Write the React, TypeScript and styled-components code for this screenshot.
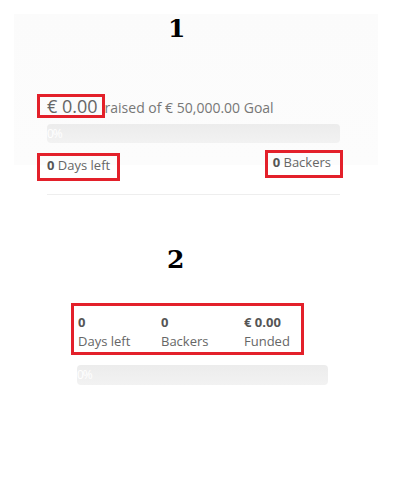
import React from 'react'
import styled, { createGlobalStyle } from 'styled-components'

const GlobalStyle = createGlobalStyle`
  body {
    margin: 0;
    background: #ffffff;
    font-family: "Open Sans", "Liberation Sans", sans-serif;
    color: #666666;
  }
`

const App: React.FC = () => {
  return (
    <Page>
      <GlobalStyle />
      <Panel>
        <Number>1</Number>
        <Card>
          <RaisedRow>
            <Highlight $pad='0 4px 0 7px'>
              <Amount>€ 0.00</Amount>
            </Highlight>
            <RaisedText>raised of € 50,000.00 Goal</RaisedText>
          </RaisedRow>
          <Progress $width={293}>0%</Progress>
          <StatsRow>
            <Highlight $pad='1px 7px 4px 7px'>
              <Stat><b>0</b> Days left</Stat>
            </Highlight>
            <Highlight $pad='1px 9px 4px 5px' $right>
              <Stat><b>0</b> Backers</Stat>
            </Highlight>
          </StatsRow>
          <Divider />
        </Card>
      </Panel>

      <Second>
        <Number>2</Number>
        <StatsBox>
          <Column>
            <b>0</b>
            <span>Days left</span>
          </Column>
          <Column>
            <b>0</b>
            <span>Backers</span>
          </Column>
          <Column>
            <b>€ 0.00</b>
            <span>Funded</span>
          </Column>
        </StatsBox>
        <Progress $width={251}>0%</Progress>
      </Second>
    </Page>
  )
}

export default App

export const Page = styled.div`
  width: 400px;
  min-height: 500px;
  padding-top: 14px;
  box-sizing: border-box;
`
export const Panel = styled.div`
  width: 364px;
  height: 182px;
  margin-left: 14px;
  padding-top: 3px;
  box-sizing: border-box;
  background: linear-gradient(#fbfbfb 0, #fcfcfc 151px, #ffffff 151px);
`
export const Number = styled.div`
  font-family: "DejaVu Serif", "Liberation Serif", serif;
  font-weight: 900;
  font-size: 25px;
  line-height: 24px;
  color: #000000;
  padding-left: 154px;
`
export const Card = styled.div`
  width: 293px;
  margin: 53px 0 0 33px;
`
export const RaisedRow = styled.div`
  display: flex;
  align-items: baseline;
`
export const Highlight = styled.div<{ $pad: string; $right?: boolean }>`
  border: 3px solid #e3202a;
  padding: ${p => p.$pad};
  margin-left: ${p => (p.$right ? '0' : '-10px')};
  margin-right: ${p => (p.$right ? '-3px' : '0')};
  margin-top: ${p => (p.$right ? '-3px' : '0')};
`
export const Amount = styled.span`
  display: block;
  font-size: 18px;
  line-height: 18px;
  color: #666666;
`
export const RaisedText = styled.span`
  font-size: 14px;
  line-height: 16px;
  color: #777777;
`
export const Progress = styled.div<{ $width: number }>`
  width: ${p => p.$width}px;
  height: 19px;
  margin-top: 6px;
  border-radius: 4px;
  background: linear-gradient(#ececec, #f2f2f2);
  color: #ffffff;
  font-size: 12px;
  line-height: 19px;
  letter-spacing: -1px;
`
export const StatsRow = styled.div`
  display: flex;
  justify-content: space-between;
  align-items: flex-start;
  margin-top: 10px;
`
export const Stat = styled.span`
  display: block;
  font-size: 13px;
  line-height: 17px;
  color: #666666;

  b {
    color: #555555;
  }
`
export const Divider = styled.div`
  height: 1px;
  margin-top: 13px;
  background: #eeeeee;
`
export const Second = styled.div`
  padding-left: 77px;
  margin-top: 52px;

  ${Number} {
    padding-left: 90px;
  }

  ${Progress} {
    margin-top: 10px;
    height: 20px;
  }
`
export const StatsBox = styled.div`
  display: flex;
  width: 233px;
  margin: 31px 0 0 -6px;
  padding: 7px 4px 1px 4px;
  border: 3px solid #e3202a;
  box-sizing: border-box;
`
export const Column = styled.div`
  width: 83px;
  flex: none;
  display: flex;
  flex-direction: column;
  font-size: 13px;
  line-height: 19px;
  color: #666666;

  b {
    color: #555555;
  }

  &:last-child {
    width: auto;
  }
`
